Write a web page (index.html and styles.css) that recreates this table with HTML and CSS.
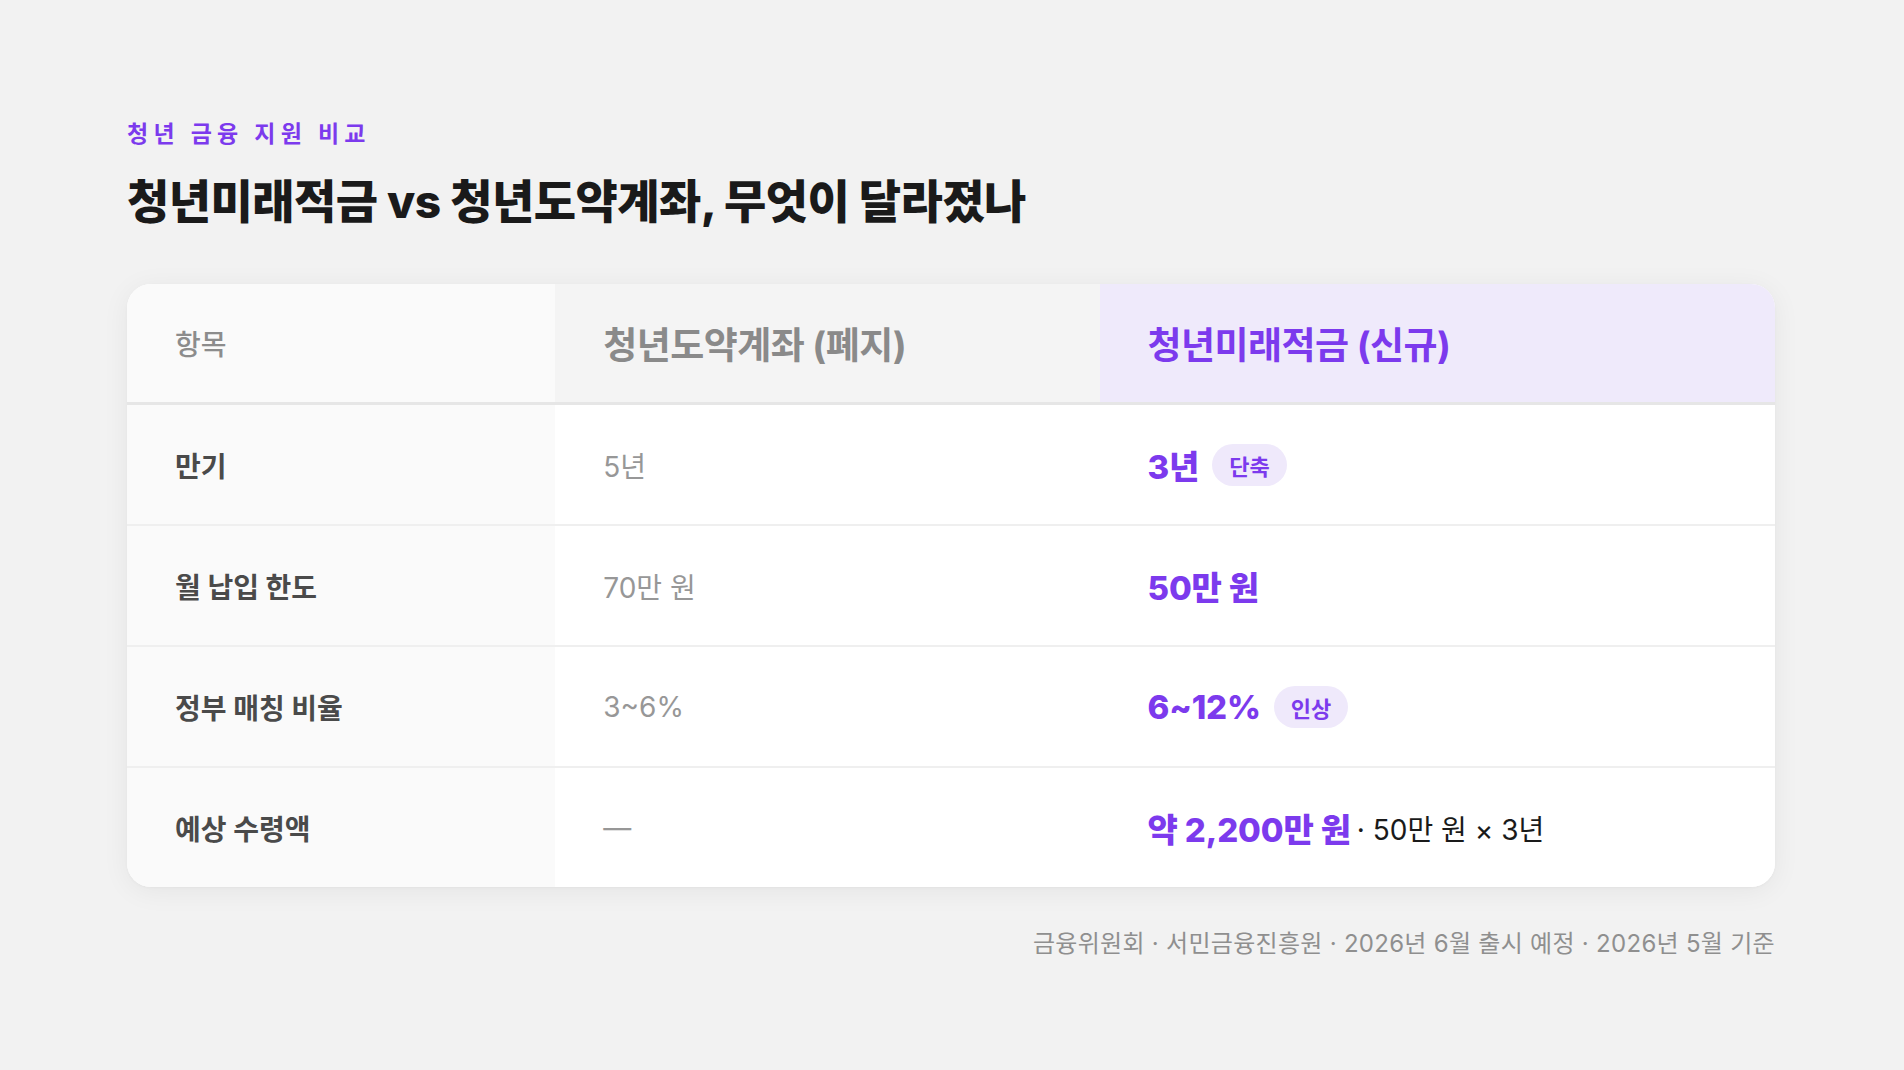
FILE: index.html
```html
<!DOCTYPE html>
<html lang="ko">
<head>
<meta charset="utf-8">
<title>청년미래적금 vs 청년도약계좌</title>
<link rel="stylesheet" href="styles.css">
</head>
<body>
<main class="page">
  <p class="eyebrow">청년 금융 지원 비교</p>
  <h1 class="title">청년미래적금 vs 청년도약계좌, 무엇이 달라졌나</h1>

  <section class="card">
    <div class="row head">
      <div class="cell c1"><span class="head-label">항목</span></div>
      <div class="cell c2"><span class="head-old">청년도약계좌 (폐지)</span></div>
      <div class="cell c3"><span class="head-new">청년미래적금 (신규)</span></div>
    </div>
    <div class="row">
      <div class="cell c1"><span class="label">만기</span></div>
      <div class="cell c2"><span class="old">5년</span></div>
      <div class="cell c3"><span class="new">3년</span><span class="badge">단축</span></div>
    </div>
    <div class="row">
      <div class="cell c1"><span class="label">월 납입 한도</span></div>
      <div class="cell c2"><span class="old">70만 원</span></div>
      <div class="cell c3"><span class="new">50만 원</span></div>
    </div>
    <div class="row">
      <div class="cell c1"><span class="label">정부 매칭 비율</span></div>
      <div class="cell c2"><span class="old">3~6%</span></div>
      <div class="cell c3"><span class="new">6~12%</span><span class="badge">인상</span></div>
    </div>
    <div class="row last">
      <div class="cell c1"><span class="label">예상 수령액</span></div>
      <div class="cell c2"><span class="old">—</span></div>
      <div class="cell c3"><span class="new">약 2,200만 원</span><span class="note">· 50만 원 × 3년</span></div>
    </div>
  </section>

  <p class="source">금융위원회 · 서민금융진흥원 · 2026년 6월 출시 예정 · 2026년 5월 기준</p>
</main>
</body>
</html>
```

FILE: styles.css
```css
* { box-sizing: border-box; }

html, body {
  margin: 0;
  padding: 0;
  background: #f2f2f2;
}

body {
  font-family: "Inter", "Noto Sans CJK KR", "Noto Sans", sans-serif;
  color: #1a1a1a;
}

.page {
  padding: 120px 129px 0 127px;
  display: flex;
  flex-direction: column;
}

.eyebrow {
  margin: 0;
  font-size: 23px;
  line-height: 28px;
  font-weight: 700;
  letter-spacing: 0.23em;
  color: #7c3aed;
}

.title {
  margin: 25px 0 0;
  font-size: 46px;
  line-height: 56px;
  font-weight: 800;
  letter-spacing: -0.012em;
  color: #1a1a1a;
}

.card {
  margin-top: 55px;
  background: #ffffff;
  border-radius: 24px;
  overflow: hidden;
  box-shadow: 0 4px 28px rgba(0, 0, 0, 0.06), 0 1px 3px rgba(0, 0, 0, 0.03);
}

.row {
  display: grid;
  grid-template-columns: 428fr 544fr 675fr;
  border-bottom: 2px solid #efefef;
}

.row.last { border-bottom: none; }

.row.head {
  border-bottom: 3px solid #e6e6e6;
}

.cell {
  display: flex;
  align-items: center;
  gap: 13px;
  padding: 0 48px;
  height: 119px;
}

.head .cell { height: 118px; }

.c1 { background: #fafafa; }
.c2 { background: #ffffff; }
.c3 { background: #ffffff; }

.head .c2 { background: #f4f4f4; }
.head .c3 { background: #efeafb; }

.head-label {
  font-size: 28px;
  font-weight: 500;
  color: #8c8c8c;
}

.head-old {
  font-size: 37px;
  font-weight: 700;
  color: #8a8a8a;
  letter-spacing: -0.015em;
}

.head-new {
  font-size: 37px;
  font-weight: 700;
  color: #7c3aed;
  letter-spacing: -0.015em;
}

.label {
  font-size: 28px;
  font-weight: 700;
  color: #4a4a4a;
}

.old {
  font-size: 28px;
  font-weight: 400;
  color: #979797;
}

.new {
  font-size: 33px;
  font-weight: 800;
  color: #7c3aed;
  letter-spacing: -0.005em;
}

.badge {
  display: inline-flex;
  align-items: center;
  height: 42px;
  padding: 0 17px;
  border-radius: 21px;
  background: #efe9fb;
  color: #7c3aed;
  font-size: 22px;
  font-weight: 700;
}

.note {
  margin-left: -7px;
  font-size: 28px;
  font-weight: 400;
  color: #1a1a1a;
}

.source {
  margin: 42px 0 0;
  align-self: flex-end;
  font-size: 24px;
  line-height: 30px;
  letter-spacing: 0.012em;
  color: #8f8f8f;
}
```
